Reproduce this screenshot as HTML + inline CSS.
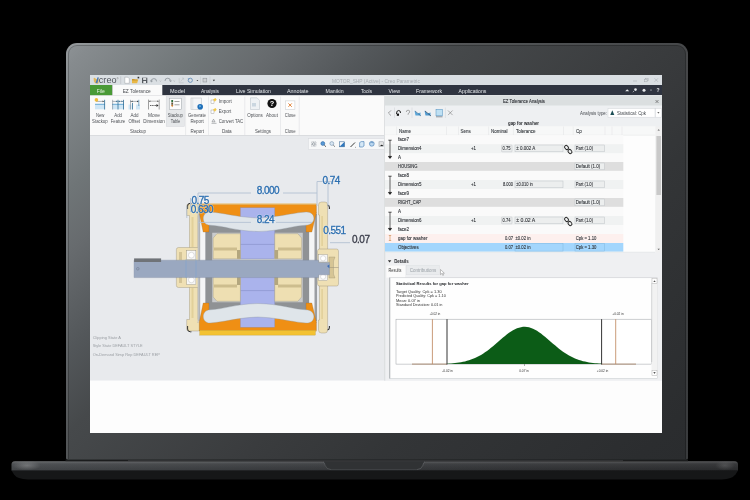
<!DOCTYPE html>
<html><head><meta charset="utf-8">
<style>
*{margin:0;padding:0;box-sizing:border-box}
html,body{width:750px;height:500px;overflow:hidden;background:#000;font-family:"Liberation Sans",sans-serif}
.a{position:absolute}
#lid{left:65.5px;top:42.5px;width:622.5px;height:417.3px;border-radius:11px 11px 2px 2px;
 background:linear-gradient(135deg,#8e9396 0%,#868b8e 2.6%,#6f7577 14.5%,#676b6e 20.4%,#53575a 29.9%,#46494b 37.7%,#3a3c3e 56.8%,#333537 70%,#2b2d2f 95%,#2a2c2e 100%);
}
</style></head><body>
<div id="lid" class="a"></div>
<div class="a" style="left:65.5px;top:42.5px;width:622.5px;height:416px;border:2px solid rgba(255,255,255,0.07);border-bottom:none;border-radius:11px 11px 0 0"></div>
<div class="a" style="left:67.5px;top:44.5px;width:618.5px;height:414px;border:1px solid rgba(0,0,0,0.22);border-bottom:none;border-radius:9px 9px 0 0"></div>
<svg class="a" style="left:0;top:0;will-change:transform" width="750" height="500" viewBox="0 0 750 500" font-family="'Liberation Sans', sans-serif">
<!--LAPTOP-->
<defs>
 <linearGradient id="bandH" x1="0" x2="1" y1="0" y2="0">
  <stop offset="0" stop-color="#44474a"/><stop offset="0.5" stop-color="#35373a"/><stop offset="1" stop-color="#2b2c2e"/>
 </linearGradient>
 <linearGradient id="bandV" x1="0" x2="0" y1="0" y2="1">
  <stop offset="0" stop-color="#000" stop-opacity="0.5"/><stop offset="0.12" stop-color="#fff" stop-opacity="0.16"/><stop offset="0.3" stop-color="#fff" stop-opacity="0.06"/><stop offset="1" stop-color="#000" stop-opacity="0.05"/>
 </linearGradient>
 <radialGradient id="hl" cx="0.5" cy="0.5" r="0.5">
  <stop offset="0" stop-color="#fff" stop-opacity="0.22"/><stop offset="1" stop-color="#fff" stop-opacity="0"/>
 </radialGradient>
</defs>
<path d="M11.5 470.6 H738 L735.5 474.5 Q732 479 722 479.6 H28 Q17 479 14 474.5 Z" fill="#161718"/>
<path d="M11.5 464.5 Q11.5 461 15.5 461 H734 Q738 461 738 464.5 V470.6 H11.5 Z" fill="url(#bandH)"/>
<path d="M11.5 464.5 Q11.5 461 15.5 461 H734 Q738 461 738 464.5 V470.6 H11.5 Z" fill="url(#bandV)"/>
<ellipse cx="27" cy="465.5" rx="14" ry="5" fill="url(#hl)"/>
<ellipse cx="725" cy="465.5" rx="10" ry="5" fill="url(#hl)" opacity="0.6"/>
<rect x="65.5" y="459.6" width="622.5" height="1.6" fill="#1b1c1d"/>
<line x1="128" y1="460.5" x2="623" y2="460.5" stroke="#4a4c4f" stroke-width="0.6" opacity="0.8"/>
<path d="M322.5 461.2 Q324 461.5 325 465 Q326 469.5 331 469.8 H417 Q422 469.5 423 465 Q424 461.5 425.5 461.2 Z" fill="#303234"/>
<path d="M323 461.5 Q324.5 462 325.2 465.5 Q326.5 469.5 331 469.6" fill="none" stroke="#8a8d90" stroke-width="0.6" opacity="0.5"/>
<path d="M425 461.5 Q423.5 462 422.8 465.5 Q421.5 469.5 417 469.6" fill="none" stroke="#9a9da0" stroke-width="0.6" opacity="0.5"/>
<line x1="331" y1="469.6" x2="417" y2="469.6" stroke="#505356" stroke-width="0.5"/>
<!--/LAPTOP-->
<rect x="90" y="75" width="572" height="358" fill="#fdfdfd"/>
<!--CHROME-->
<!-- title bar -->
<rect x="90" y="75" width="572" height="10" fill="#dadfe3"/>
<g>
 <path d="M93.6 78.3 Q93.6 83.8 97.5 83.8 Q98.6 83.8 98.6 82.5 V77.6 Q96.5 80.8 94.8 77.8 Z" fill="#e2b75a"/>
 <path d="M95.6 82.8 L97.6 77.2 L98.8 77.6 L97.3 83.2 Z" fill="#3f78c0"/>
 <text x="98.8" y="82.9" font-size="8.3" fill="#50555c" textLength="17.8" lengthAdjust="spacingAndGlyphs">creo</text>
 <circle cx="117.6" cy="78.2" r="0.7" fill="none" stroke="#666" stroke-width="0.3"/>
 <line x1="120.7" y1="76.3" x2="120.7" y2="84" stroke="#b9bec3" stroke-width="0.6"/>
 <path d="M124.8 77.2 h3 l1.5 1.5 v4.6 h-4.5 z" fill="#fff" stroke="#8a8f94" stroke-width="0.4"/>
 <path d="M132 79.6 h6.3 l-1.2 3.6 h-5.1 z" fill="#e9b845"/>
 <path d="M132 79 h2.2 l0.6 0.6 h2.6 v0.8 h-5.4z" fill="#c9962e"/>
 <rect x="137.6" y="76.8" width="1.6" height="1.6" fill="#333"/>
 <rect x="142" y="77.7" width="5.3" height="5.5" fill="#565b61"/>
 <rect x="143.1" y="78.1" width="3.1" height="1.8" fill="#e6e8ea"/>
 <rect x="143.3" y="81" width="2.7" height="2" fill="#e6e8ea"/>
 <path d="M151.3 81.8 q-0.4 -3.2 2.6 -3.2 q2.8 0 2.6 2.8" fill="none" stroke="#7f868e" stroke-width="0.7"/>
 <path d="M150.4 80.2 l0.9 1.8 l1.5 -1.1" fill="none" stroke="#7f868e" stroke-width="0.55"/>
 <path d="M159.7 80.6 l0.8 0.7 l0.8 -0.7" fill="none" stroke="#8a8f94" stroke-width="0.4"/>
 <path d="M165 81 q-0.2 -2.8 2.8 -2.8 q2.8 0 2.6 3" fill="none" stroke="#7f868e" stroke-width="0.7"/>
 <path d="M169.5 80.4 l1.1 1.5 l1.1 -1.5" fill="none" stroke="#7f868e" stroke-width="0.55"/>
 <path d="M173.5 80.6 l0.8 0.7 l0.8 -0.7" fill="none" stroke="#8a8f94" stroke-width="0.4"/>
 <path d="M179.2 78.2 v4.6 h4.4" fill="none" stroke="#b5babf" stroke-width="0.5"/>
 <path d="M180.6 81.5 l3 -3.4 M182 78.1 h1.6 v1.6" fill="none" stroke="#b5babf" stroke-width="0.5"/>
 <circle cx="190.3" cy="80.3" r="2.1" fill="none" stroke="#5a86b4" stroke-width="0.8"/>
 <path d="M188 78.2 l1 1" stroke="#5a86b4" stroke-width="0.6"/>
 <path d="M196.5 80 h1.8 l-0.9 1.1z" fill="#222"/>
 <line x1="200.5" y1="76.5" x2="200.5" y2="84" stroke="#c2c6ca" stroke-width="0.5"/>
 <rect x="203" y="78.2" width="3.8" height="3.8" fill="#d0d3d6" stroke="#8a8f94" stroke-width="0.5"/>
 <line x1="210" y1="76.5" x2="210" y2="84" stroke="#c2c6ca" stroke-width="0.5"/>
 <path d="M212.8 79.8 h2.2 l-1.1 1.4z" fill="#222"/>
</g>
<text x="332" y="82.6" font-size="4.85" fill="#a7acb1">MOTOR_SHP (Active) - Creo Parametric</text>
<line x1="633" y1="81" x2="637" y2="81" stroke="#a0a5aa" stroke-width="0.5"/>
<rect x="645.5" y="78.2" width="2.6" height="2.6" fill="none" stroke="#a0a5aa" stroke-width="0.45"/>
<rect x="644.5" y="79.2" width="2.6" height="2.6" fill="#dadfe3" stroke="#a0a5aa" stroke-width="0.45"/>
<path d="M654.5 78.3 l3.5 3.5 M658 78.3 l-3.5 3.5" stroke="#a0a5aa" stroke-width="0.5"/>
<!-- tab row -->
<rect x="90" y="85" width="572" height="10.4" fill="#2f3440"/>
<rect x="90" y="85" width="22.3" height="10.4" fill="#4a9a36"/>
<rect x="112.3" y="85" width="50" height="10.4" fill="#fafafa"/>
<g font-size="5.4" fill="#e4e7ea" lengthAdjust="spacingAndGlyphs">
 <text x="96.7" y="92.7" fill="#e8f2e4" textLength="8" lengthAdjust="spacingAndGlyphs">File</text>
 <text x="122.7" y="92.7" fill="#4a4d52" textLength="28" lengthAdjust="spacingAndGlyphs">EZ Tolerance</text>
 <text x="170" y="92.7" textLength="15" lengthAdjust="spacingAndGlyphs">Model</text>
 <text x="201" y="92.7" textLength="18" lengthAdjust="spacingAndGlyphs">Analysis</text>
 <text x="236" y="92.7" textLength="35" lengthAdjust="spacingAndGlyphs">Live Simulation</text>
 <text x="287" y="92.7" textLength="21.6" lengthAdjust="spacingAndGlyphs">Annotate</text>
 <text x="325.6" y="92.7" textLength="18" lengthAdjust="spacingAndGlyphs">Manikin</text>
 <text x="361" y="92.7" textLength="11" lengthAdjust="spacingAndGlyphs">Tools</text>
 <text x="388.6" y="92.7" textLength="11.4" lengthAdjust="spacingAndGlyphs">View</text>
 <text x="416" y="92.7" textLength="26" lengthAdjust="spacingAndGlyphs">Framework</text>
 <text x="458.6" y="92.7" textLength="27.8" lengthAdjust="spacingAndGlyphs">Applications</text>
</g>
<g fill="#e8eaec">
 <path d="M625.2 91.3 l2 -2 l2 2 z"/>
 <circle cx="635.5" cy="89.6" r="1.3"/>
 <path d="M634 91 l-1.2 1.2" stroke="#e8eaec" stroke-width="0.6"/>
 <circle cx="644" cy="90.2" r="1.5"/>
 <path d="M650 89.8 h2 l-1 1z"/>
 <text x="656.5" y="92.3" font-size="5" font-weight="bold">?</text>
</g>
<!-- ribbon -->
<rect x="90" y="95.4" width="572" height="40.2" fill="#fafafa"/>
<line x1="90" y1="135.6" x2="384" y2="135.6" stroke="#d7d9dc" stroke-width="1"/>
<rect x="166.2" y="96.6" width="18.3" height="29.9" fill="#e6e8ea" stroke="#d6d8db" stroke-width="0.5"/>
<g stroke="#e2e4e6" stroke-width="0.7">
 <line x1="185.6" y1="96.5" x2="185.6" y2="135"/>
 <line x1="208.5" y1="96.5" x2="208.5" y2="135"/>
 <line x1="244.8" y1="96.5" x2="244.8" y2="135"/>
 <line x1="280.5" y1="96.5" x2="280.5" y2="135"/>
 <line x1="299.2" y1="96.5" x2="299.2" y2="135"/>
</g>
<g font-size="4.6" fill="#4e5156">
 <text x="95.9" y="117.4" textLength="8.5" lengthAdjust="spacingAndGlyphs">New</text>
 <text x="92.1" y="123.3" textLength="15.5" lengthAdjust="spacingAndGlyphs">Stackup</text>
 <text x="114.3" y="117.4" textLength="7.7" lengthAdjust="spacingAndGlyphs">Add</text>
 <text x="110.8" y="123.3" textLength="14.4" lengthAdjust="spacingAndGlyphs">Feature</text>
 <text x="130.5" y="117.4" textLength="8.0" lengthAdjust="spacingAndGlyphs">Add</text>
 <text x="128.4" y="123.3" textLength="11.7" lengthAdjust="spacingAndGlyphs">Offset</text>
 <text x="148.1" y="117.4" textLength="11.8" lengthAdjust="spacingAndGlyphs">Move</text>
 <text x="143.3" y="123.3" textLength="21.4" lengthAdjust="spacingAndGlyphs">Dimension</text>
 <text x="167.7" y="117.4" textLength="15.2" lengthAdjust="spacingAndGlyphs">Stackup</text>
 <text x="170.7" y="123.3" textLength="9.6" lengthAdjust="spacingAndGlyphs">Table</text>
 <text x="188.0" y="117.4" textLength="18.0" lengthAdjust="spacingAndGlyphs">Generate</text>
 <text x="190.4" y="123.3" textLength="13.3" lengthAdjust="spacingAndGlyphs">Report</text>
 <text x="247.3" y="117.4" textLength="15.6" lengthAdjust="spacingAndGlyphs">Options</text>
 <text x="266.1" y="117.4" textLength="11.8" lengthAdjust="spacingAndGlyphs">About</text>
 <text x="284.8" y="117.4" textLength="10.7" lengthAdjust="spacingAndGlyphs">Close</text>
 <text x="130.0" y="132.9" textLength="16.0" lengthAdjust="spacingAndGlyphs">Stackup</text>
 <text x="190.4" y="132.9" textLength="13.6" lengthAdjust="spacingAndGlyphs">Report</text>
 <text x="221.9" y="132.9" textLength="9.8" lengthAdjust="spacingAndGlyphs">Data</text>
 <text x="254.9" y="132.9" textLength="16.0" lengthAdjust="spacingAndGlyphs">Settings</text>
 <text x="284.8" y="132.9" textLength="10.7" lengthAdjust="spacingAndGlyphs">Close</text>
 <text x="218.7" y="102.6" textLength="13.0" lengthAdjust="spacingAndGlyphs">Import</text>
 <text x="218.7" y="112.6" textLength="12.6" lengthAdjust="spacingAndGlyphs">Export</text>
 <text x="218.7" y="122.7" textLength="24.5" lengthAdjust="spacingAndGlyphs">Convert TAC</text>
</g>
<!-- ribbon icons -->
<g>
 <!-- New Stackup -->
 <rect x="95" y="103.8" width="10" height="5.5" fill="#cfe6f5"/>
 <rect x="95" y="103.8" width="10" height="1.2" fill="#7fb7dc"/>
 <line x1="96" y1="101.4" x2="104.5" y2="101.4" stroke="#5b6a78" stroke-width="0.5"/>
 <line x1="104.6" y1="99.8" x2="104.6" y2="109.5" stroke="#2f6e98" stroke-width="0.8"/>
 <path d="M103.9 101.4 l-1.3 -0.8 v1.6z" fill="#333"/>
 <circle cx="96.4" cy="99.9" r="1.8" fill="#f2bd3a"/>
 <!-- Add Feature -->
 <rect x="112" y="103.8" width="12" height="5.5" fill="#cfe6f5"/>
 <rect x="112" y="103.8" width="12" height="1.2" fill="#7fb7dc"/>
 <line x1="112.5" y1="101.4" x2="123.5" y2="101.4" stroke="#5b6a78" stroke-width="0.5"/>
 <line x1="112.6" y1="99.8" x2="112.6" y2="109.5" stroke="#6a7680" stroke-width="0.5"/>
 <line x1="118" y1="99.8" x2="118" y2="109.5" stroke="#2f6e98" stroke-width="0.8"/>
 <line x1="123.5" y1="99.8" x2="123.5" y2="109.5" stroke="#2f6e98" stroke-width="0.8"/>
 <path d="M117.4 101.4 l-1.3 -0.8 v1.6z M118.6 101.4 l1.3 -0.8 v1.6z M122.8 101.4 l-1.3 -0.8 v1.6z" fill="#2f6e98"/>
 <!-- Add Offset -->
 <rect x="128.5" y="104.5" width="3" height="5" fill="#cfe6f5"/>
 <rect x="136" y="104.5" width="4" height="5" fill="#cfe6f5"/>
 <line x1="130" y1="101.4" x2="138.8" y2="101.4" stroke="#5b6a78" stroke-width="0.5"/>
 <line x1="130.5" y1="99.8" x2="130.5" y2="109.5" stroke="#6a7680" stroke-width="0.5"/>
 <line x1="132.5" y1="103" x2="132.5" y2="109.5" stroke="#2f6e98" stroke-width="0.8"/>
 <line x1="138.8" y1="99.8" x2="138.8" y2="106" stroke="#2f6e98" stroke-width="0.6"/>
 <path d="M138.3 101.4 l-1.3 -0.8 v1.6z M131.2 101.4 l1.3 -0.8 v1.6z" fill="#333"/>
 <!-- Move Dimension -->
 <line x1="148.5" y1="99.6" x2="148.5" y2="109.5" stroke="#444" stroke-width="0.5"/>
 <line x1="159.2" y1="99.6" x2="159.2" y2="109.5" stroke="#444" stroke-width="0.5"/>
 <line x1="149" y1="101.2" x2="158.5" y2="101.2" stroke="#555" stroke-width="0.4"/>
 <path d="M149 101.2 l1.3 -0.8 v1.6z M158.7 101.2 l-1.3 -0.8 v1.6z" fill="#333"/>
 <line x1="150" y1="105.5" x2="157" y2="105.5" stroke="#222" stroke-width="0.7" stroke-dasharray="1.2 0.5"/>
 <path d="M158.5 105.5 l-2 -1.4 v2.8z" fill="#222"/>
 <!-- Stackup table -->
 <rect x="169.3" y="98.2" width="12" height="11.4" fill="#fdfdfd" stroke="#9ca1a6" stroke-width="0.5"/>
 <rect x="171.3" y="100" width="1.8" height="2.2" fill="#2b6e3a"/>
 <rect x="171.3" y="102.6" width="1.8" height="2.2" fill="#6b5a3e"/>
 <path d="M171 105 h2.4 l-1.2 2.2z" fill="#c77c2e"/>
 <line x1="174.5" y1="101.5" x2="179.5" y2="101.5" stroke="#666" stroke-width="0.6"/>
 <line x1="174.5" y1="104.8" x2="179.5" y2="104.8" stroke="#666" stroke-width="0.6"/>
 <!-- Generate report -->
 <rect x="191" y="98" width="10.5" height="11.5" fill="#f4f5f6" stroke="#b8bcc0" stroke-width="0.5"/>
 <line x1="192.8" y1="98" x2="192.8" y2="109.5" stroke="#c6cacd" stroke-width="0.4"/>
 <circle cx="200.2" cy="106.8" r="2.8" fill="#1f6fb8"/>
 <path d="M199.2 105.5 q1 -0.7 1.8 0.4 q-0.5 1.2 -1.5 1.5z" fill="#7cc2ec"/>
 <!-- import/export/convert -->
 <rect x="211" y="100" width="3" height="3.5" fill="#fff" stroke="#777" stroke-width="0.35"/>
 <path d="M213 99.5 l2.5 -1.5 l1.2 1.8 l-2 2z" fill="#f2c94c"/>
 <rect x="211" y="110" width="3" height="3.5" fill="#fff" stroke="#777" stroke-width="0.35"/>
 <path d="M213 109.5 l2.5 -1.5 l1.2 1.8 l-2 2z" fill="#f2c94c"/>
 <path d="M211.5 123.3 h5 M212 121.8 l1.5 -2.6 l1.5 2.6z" fill="none" stroke="#6b6f74" stroke-width="0.5"/>
 <!-- Options -->
 <path d="M250.5 97.8 h6.5 l2.5 2.5 v9.2 h-9z" fill="#eef1f4" stroke="#b5bcc4" stroke-width="0.5"/>
 <rect x="252" y="103" width="4" height="3.5" fill="#cad6e0"/>
 <!-- About -->
 <circle cx="272" cy="103.5" r="4.6" fill="#121212"/>
 <text x="272" y="106.3" font-size="7.4" font-weight="bold" fill="#fff" text-anchor="middle">?</text>
 <!-- Close -->
 <rect x="285.3" y="100.9" width="9.6" height="8.5" fill="#fff" stroke="#c6c8ca" stroke-width="0.5"/>
 <path d="M288.4 103.4 l3.4 3.4 M291.8 103.4 l-3.4 3.4" stroke="#e07b2a" stroke-width="0.9"/>
</g>
<!--/CHROME-->
<rect x="90" y="136" width="294.5" height="244.5" fill="#e8eaed"/>
<!--CAD-->
<defs>
 <g id="half">
  <!-- end caps upper -->
  <path d="M189.5 267.5 V215.5 h-2.8 V206 q0 -2 2 -2 h9.3 q2 0 2 2 V215.5 h-2 V267.5z" fill="#efe0b4" stroke="#8a826a" stroke-width="0.35"/><rect x="191.5" y="217" width="2" height="30" fill="#e2d09a"/>
  <path d="M176.4 267.5 V249.5 q0 -2 2 -2 h20 q2 0 2 2 V267.5z" fill="#efe0b4" stroke="#8a826a" stroke-width="0.35"/>
  <path d="M319.5 267.5 V215 h-1 V205 q0 -3 3 -3 h3.5 q2.6 0 2.6 3 V267.5z" fill="#efe0b4" stroke="#8a826a" stroke-width="0.35"/><rect x="321.3" y="216" width="1.6" height="30" fill="#e2d09a"/>
  <path d="M317.5 267.5 V251 q0 -2 2 -2 h17 q2 0 2 2 V267.5z" fill="#efe0b4" stroke="#8a826a" stroke-width="0.35"/><path d="M329 267.5 V257 h6 l-1.5 4 V267.5z" fill="#d6c595" stroke="#8a826a" stroke-width="0.3"/>
  <rect x="186.8" y="250.6" width="9.1" height="9.1" fill="#f6f6f6" stroke="#777" stroke-width="0.3"/>
  <circle cx="191.35" cy="255.15" r="2.9" fill="#fff" stroke="#999" stroke-width="0.3"/>
  <rect x="318.6" y="254.6" width="9" height="7.4" fill="#f6f6f6" stroke="#777" stroke-width="0.3"/>
  <circle cx="323.1" cy="258.3" r="2.6" fill="#fff" stroke="#999" stroke-width="0.3"/>
  <rect x="179" y="252" width="3" height="8" fill="#c9b88a" opacity="0.7"/>
  <!-- liners -->
  <path d="M197.8 212 L205.5 228 V267.5 H197.8z" fill="#f4f5f6" stroke="#9a9ea3" stroke-width="0.3"/>
  <path d="M316.5 212 L309 228 V267.5 H316.5z" fill="#f4f5f6" stroke="#9a9ea3" stroke-width="0.3"/>
  <rect x="314.5" y="214" width="2.5" height="53" fill="#9b9ea2"/>
  <rect x="198.2" y="214" width="2" height="53" fill="#b2b5b8"/>
  <!-- gray inner -->
  <path d="M205.5 222 H309 V267.5 H205.5z" fill="#8f9295"/>
  <path d="M212.2 232.8 H302.8 V267.5 H212.2z" fill="#c9cbcd"/>
  <!-- orange housing -->
  <path d="M199.3 204.2 H316.4 V213 L311.8 232 H306 V224 H209 V232 H203.2 L199.3 213z" fill="#ef8f14" stroke="#8f6a3a" stroke-width="0.3"/>
  <rect x="199.8" y="203.5" width="116.6" height="1" fill="#f1c46a"/>
  <!-- lavender stack -->
  <rect x="240.4" y="207.8" width="34.3" height="51" fill="#aab3ec" stroke="#7f88c0" stroke-width="0.3"/>
  <line x1="240.4" y1="244.4" x2="274.7" y2="244.4" stroke="#7f88c0" stroke-width="0.5"/>
  <!-- coil -->
  <path d="M210 212 C225 213 235 217 258 218 C281 217 291 213 306 212 C316.5 211.5 316.5 225 306 225.2 C291 226 281 231 258 231.5 C235 231 225 226 210 225.2 C201 225 201 212 210 212Z" fill="#dfe5ea" stroke="#8f979f" stroke-width="0.35"/>
  <!-- rotor blocks -->
  <path d="M213.2 238 L217 233.7 H240.4 V258.8 H213.2z" fill="#eedfb2" stroke="#8d8468" stroke-width="0.3"/>
  <rect x="214" y="247.5" width="23" height="3" fill="#cdbd8e"/>
  <rect x="237" y="250" width="3.4" height="8.8" fill="#b3a67e"/>
  <path d="M301.6 238 L297.8 233.7 H274.7 V258.8 H301.6z" fill="#eedfb2" stroke="#8d8468" stroke-width="0.3"/>
  <rect x="278" y="247.5" width="23" height="3" fill="#cdbd8e"/>
  <rect x="274.7" y="250" width="3.4" height="8.8" fill="#b3a67e"/>
  <!-- bolts -->
  <path d="M187.6 209 v-3 q0 -2.8 2.8 -2.8 h1" fill="none" stroke="#333" stroke-width="1"/>
  <path d="M327.6 205 q1.8 0.5 1.8 2.5 v1.5" fill="none" stroke="#333" stroke-width="1.1"/>
 </g>
</defs>
<use href="#half"/>
<use href="#half" transform="translate(0,535) scale(1,-1)"/>
<!-- shaft -->
<path d="M134.1 260.2 H318.6 V262.4 H329.4 V274.8 H318.6 V277.6 H134.1z" fill="#9aa8c0" stroke="#7d8aa2" stroke-width="0.4"/><path d="M327 266 l2.4 -1.5 v4z" fill="#3d6fb8"/>
<rect x="134.1" y="258.4" width="27" height="3.6" fill="#6f7378"/>
<circle cx="137.8" cy="268.8" r="1.3" fill="none" stroke="#5a6478" stroke-width="0.4"/>
<line x1="186" y1="259" x2="186" y2="278" stroke="#6aa0d8" stroke-width="0.6" opacity="0.6"/>
<line x1="196" y1="259" x2="196" y2="278" stroke="#6aa0d8" stroke-width="0.6" opacity="0.6"/>
<!-- bottom foot -->
<rect x="199.8" y="330.3" width="115.5" height="4.8" fill="#f3c232" stroke="#b58d1a" stroke-width="0.3"/>
<!-- dimensions -->
<g stroke="#b3c2d3" stroke-width="0.9" fill="none">
 <path d="M198 193 H251 M283 193 H317"/>
 <path d="M198 193 V212"/>
 <path d="M317 181.5 V206 M328 181.5 V206 M317 181.5 H340"/>
 <path d="M198 222.4 H251 M276 222.4 H312"/>
 <path d="M190.5 198 V212 M186.8 206 V218"/>
 <path d="M330 242.7 H350"/>
</g>
<g font-size="10" letter-spacing="-0.55" fill="none" stroke="#ffffff" stroke-width="1.1" stroke-opacity="0.6" stroke-linejoin="round">
 <text x="256.8" y="194">8.000</text>
 <text x="256.8" y="223.3">8.24</text>
 <text x="191.5" y="203.6">0.75</text>
 <text x="190.8" y="213.2">0.630</text>
 <text x="322.4" y="183.6">0.74</text>
 <text x="323.3" y="233.6">0.551</text>
</g>
<g font-size="10" letter-spacing="-0.55" fill="#2d6fb0" stroke="#2d6fb0" stroke-width="0.35">
 <text x="256.8" y="194">8.000</text>
 <text x="256.8" y="223.3">8.24</text>
 <text x="191.5" y="203.6">0.75</text>
 <text x="190.8" y="213.2">0.630</text>
 <text x="322.4" y="183.6">0.74</text>
 <text x="323.3" y="233.6">0.551</text>
</g>
<text x="352" y="243.2" font-size="10" letter-spacing="-0.5" fill="#383b48" stroke="#383b48" stroke-width="0.3">0.07</text>
<!-- status text -->
<g font-size="4" fill="#9ca0a5">
 <text x="92.7" y="338.7" textLength="28.2" lengthAdjust="spacingAndGlyphs">Clipping State A</text>
 <text x="92.7" y="347" textLength="50" lengthAdjust="spacingAndGlyphs">Style State DEFAULT STYLE</text>
 <text x="92.7" y="355.6" textLength="67.2" lengthAdjust="spacingAndGlyphs">On-Demand Simp Rep DEFAULT REP</text>
</g>
<!-- view toolbar -->
<rect x="308.4" y="138.6" width="80" height="10.8" fill="#f7f8f9" stroke="#d5d8db" stroke-width="0.5"/>
<g stroke-width="0.55" fill="none">
 <rect x="311.6" y="141.8" width="4.4" height="4.4" stroke="#8a9098" stroke-dasharray="1 0.6"/>
 <circle cx="313.8" cy="144" r="1.3" stroke="#5a6470"/>
 <circle cx="322.8" cy="143.5" r="1.9" stroke="#1f5e9e" fill="#5a9ad6"/><path d="M324.2 145 l1.8 1.8" stroke="#333" stroke-width="0.8"/>
 <circle cx="331.8" cy="143.5" r="1.9" stroke="#6a8aa8" fill="#d9e6f2"/><path d="M333.2 145 l1.8 1.8" stroke="#666" stroke-width="0.8"/>
 <path d="M339.5 146.8 h5 v-5z" fill="#2f78c0" stroke="none"/><rect x="339.5" y="141.8" width="5" height="5" stroke="#3a6a98"/>
 <path d="M350.5 147 l4.5 -4.5" stroke="#222" stroke-width="0.9"/><circle cx="355.6" cy="147.2" r="0.4" fill="#222"/>
 <path d="M359.6 142.6 l1.6 -1 h2.8 v4.4 l-1.6 1 h-2.8z" fill="#d6e8f6" stroke="#2e6aa8"/>
 <circle cx="371.8" cy="143.8" r="2.4" fill="#bcd8f0" stroke="#2e6aa8"/><path d="M370.5 143 q1.3 -1.5 2.6 0" stroke="#2e6aa8"/>
 <rect x="379" y="141.8" width="4.6" height="4.6" fill="#e3e4e5" stroke="#9a9ea3"/><path d="M380.2 146 q1.5 -2.5 3 0z" fill="#222" stroke="none"/>
</g>
<!--/CAD-->
<rect x="384.4" y="95.4" width="277.6" height="285.2" fill="#f0f1f2"/>
<!--DIALOG-->
<!-- dialog base -->
<rect x="384.4" y="95.4" width="277.6" height="285.2" fill="#eff0f2"/>
<line x1="384.7" y1="95.4" x2="384.7" y2="380.6" stroke="#c9ccd0" stroke-width="0.6"/>
<!-- title -->
<rect x="385" y="95.4" width="277" height="10.3" fill="#dbdfe0"/>
<text x="503" y="102.9" font-size="4.6" fill="#2e3136" stroke="#2e3136" stroke-width="0.1" textLength="42" lengthAdjust="spacingAndGlyphs">EZ Tolerance Analysis</text>
<path d="M655.5 100 l3 3 M658.5 100 l-3 3" stroke="#444" stroke-width="0.55"/>
<!-- toolbar -->
<rect x="385" y="105.7" width="277" height="20.7" fill="#eef0f2"/>
<g stroke="#cfd2d6" stroke-width="0.5">
 <line x1="394.5" y1="107.5" x2="394.5" y2="118"/>
 <line x1="412" y1="107.5" x2="412" y2="118"/>
 <line x1="445.4" y1="107.5" x2="445.4" y2="118"/>
</g>
<path d="M391 110.4 l-2.6 2.6 l2.6 2.6" fill="none" stroke="#555" stroke-width="0.5"/>
<path d="M396.5 114 q-0.3 -3.5 2.2 -3.5 q2 0 1.8 2.5" fill="none" stroke="#111" stroke-width="0.9"/>
<rect x="396.8" y="113.6" width="2.2" height="2.2" fill="#111"/>
<path d="M406.3 112 q0 -1.8 1.8 -1.8 q1.8 0 1.6 1.8 q-0.2 1 -1.6 1.6 v1.2" fill="none" stroke="#777" stroke-width="0.6"/>
<path d="M414.5 110.5 l3 3 l3 -1 v3 h-5z" fill="#5aa6d8"/>
<path d="M415 111 l6 5" stroke="#2d5c88" stroke-width="0.6"/>
<path d="M424.5 110.5 l3 3 l3 -1 v3 h-5z" fill="#4f9ad0"/>
<path d="M425 111 l6 5" stroke="#1d3c5c" stroke-width="0.7"/>
<rect x="436" y="109.3" width="6.5" height="6.5" fill="#bfe0f3" stroke="#4f8fbf" stroke-width="0.5"/>
<line x1="436" y1="116.8" x2="442.5" y2="116.8" stroke="#4a5560" stroke-width="0.6"/>
<path d="M448 110.5 l4.6 4.6 M452.6 110.5 l-4.6 4.6" stroke="#666" stroke-width="0.5"/>
<text x="580" y="114.6" font-size="4.7" fill="#43474d" textLength="27" lengthAdjust="spacingAndGlyphs">Analysis type:</text>
<rect x="608" y="108.6" width="47" height="8.6" fill="#fff" stroke="#d3d6da" stroke-width="0.5"/>
<rect x="655.5" y="108.6" width="5.8" height="8.6" fill="#fff" stroke="#d3d6da" stroke-width="0.5"/>
<path d="M657.3 112.3 h2.2 l-1.1 1.2z" fill="#333"/>
<path d="M612.3 110.3 l2 4.6 h-4z" fill="#1c4e55"/>
<text x="617" y="114.6" font-size="4.7" fill="#43474d" textLength="29" lengthAdjust="spacingAndGlyphs">Statistical: Cpk</text>
<text x="508" y="124.6" font-size="4.8" font-weight="bold" fill="#1e2024" textLength="31" lengthAdjust="spacingAndGlyphs">gap for washer</text>
<!-- table -->
<rect x="385" y="126.6" width="270.4" height="125.6" fill="#fdfdfd"/>
<rect x="385" y="126.6" width="270.4" height="8.6" fill="#f7f8f8"/>
<line x1="385" y1="135.2" x2="655" y2="135.2" stroke="#e1e3e5" stroke-width="0.5"/>
<g stroke="#e1e3e5" stroke-width="0.5">
 <line x1="396.6" y1="126.6" x2="396.6" y2="135.2"/>
 <line x1="446.5" y1="126.6" x2="446.5" y2="135.2"/>
 <line x1="458.5" y1="126.6" x2="458.5" y2="135.2"/>
 <line x1="488.6" y1="126.6" x2="488.6" y2="135.2"/>
 <line x1="513.4" y1="126.6" x2="513.4" y2="135.2"/>
 <line x1="563.5" y1="126.6" x2="563.5" y2="135.2"/>
 <line x1="573.2" y1="126.6" x2="573.2" y2="135.2"/>
 <line x1="605" y1="126.6" x2="605" y2="135.2"/>
 <line x1="612" y1="126.6" x2="612" y2="135.2"/>
 <line x1="622" y1="126.6" x2="622" y2="135.2"/>
</g>
<g font-size="4.5" fill="#3c4045" stroke="#3c4045" stroke-width="0.1">
 <text x="399" y="132.8">Name</text>
 <text x="460.5" y="132.8">Sens</text>
 <text x="491" y="132.8">Nominal</text>
 <text x="516" y="132.8">Tolerance</text>
 <text x="576" y="132.8">Cp</text>
</g>
<!-- rows bg -->
<rect x="385" y="135.2" width="238.3" height="117" fill="#fafafa"/>
<rect x="385" y="144.2" width="238.3" height="9" fill="#f0f2f2"/>
<rect x="385" y="162" width="238.3" height="8.8" fill="#dedede"/>
<rect x="385" y="180" width="238.3" height="9" fill="#f0f2f2"/>
<rect x="385" y="198" width="238.3" height="8.8" fill="#dedede"/>
<rect x="385" y="216" width="238.3" height="9" fill="#f0f2f2"/>
<rect x="385" y="234" width="238.3" height="9" fill="#fdf0ee"/>
<rect x="385" y="243" width="238.3" height="8.6" fill="#a3d6fd"/>
<!-- row texts -->
<g font-size="4.7" fill="#2e3136" stroke="#2e3136" stroke-width="0.1">
 <text x="398.0" y="141.4" textLength="11.0" lengthAdjust="spacingAndGlyphs">face7</text>
 <text x="398.0" y="150.4" textLength="23.6" lengthAdjust="spacingAndGlyphs">Dimension4</text>
 <text x="398.0" y="159.4" textLength="3.0" lengthAdjust="spacingAndGlyphs">A</text>
 <text x="398.0" y="168.3" textLength="19.4" lengthAdjust="spacingAndGlyphs">HOUSING</text>
 <text x="398.0" y="177.4" textLength="11.0" lengthAdjust="spacingAndGlyphs">face8</text>
 <text x="398.0" y="186.4" textLength="23.6" lengthAdjust="spacingAndGlyphs">Dimension5</text>
 <text x="398.0" y="195.4" textLength="11.0" lengthAdjust="spacingAndGlyphs">face9</text>
 <text x="398.0" y="204.3" textLength="23.0" lengthAdjust="spacingAndGlyphs">RIGHT_CAP</text>
 <text x="398.0" y="213.4" textLength="3.0" lengthAdjust="spacingAndGlyphs">A</text>
 <text x="398.0" y="222.4" textLength="23.6" lengthAdjust="spacingAndGlyphs">Dimension6</text>
 <text x="398.0" y="231.4" textLength="11.0" lengthAdjust="spacingAndGlyphs">face2</text>
 <text x="398.0" y="240.4" textLength="29.4" lengthAdjust="spacingAndGlyphs">gap for washer</text>
 <text x="398.0" y="249.2" textLength="20.6" lengthAdjust="spacingAndGlyphs">Objectives</text>
 <text x="471.0" y="150.4" textLength="5.0" lengthAdjust="spacingAndGlyphs">+1</text>
 <text x="471.0" y="186.4" textLength="5.0" lengthAdjust="spacingAndGlyphs">+1</text>
 <text x="471.0" y="222.4" textLength="5.0" lengthAdjust="spacingAndGlyphs">+1</text>
 <text x="503.0" y="186.4" textLength="10.0" lengthAdjust="spacingAndGlyphs">8.000</text>
 <text x="505.0" y="240.4" textLength="8.0" lengthAdjust="spacingAndGlyphs">0.07</text>
 <text x="505.0" y="249.2" textLength="8.0" lengthAdjust="spacingAndGlyphs">0.07</text>
 <text x="515.5" y="240.4" textLength="15.0" lengthAdjust="spacingAndGlyphs">±0.02 in</text>
 <text x="515.5" y="249.2" textLength="15.0" lengthAdjust="spacingAndGlyphs">±0.02 in</text>
 <text x="575.7" y="240.4" textLength="20.7" lengthAdjust="spacingAndGlyphs">Cpk = 1.10</text>
 <text x="575.7" y="249.2" textLength="20.7" lengthAdjust="spacingAndGlyphs">Cpk = 1.30</text>
</g>
<!-- cells with boxes -->
<g fill="#eceeee" stroke="#b9bdc2" stroke-width="0.45">
 <rect x="501.6" y="145" width="10.4" height="6.8" rx="0.6"/>
 <rect x="515" y="145" width="48" height="6.8"/>
 <rect x="515" y="181" width="48" height="6.8"/>
 <rect x="501.6" y="217" width="10.4" height="6.8" rx="0.6"/>
 <rect x="515" y="217" width="48" height="6.8"/>
 <rect x="575" y="145" width="29.5" height="6.8"/>
 <rect x="575" y="163" width="29.5" height="6.8"/>
 <rect x="575" y="181" width="29.5" height="6.8"/>
 <rect x="575" y="199" width="29.5" height="6.8"/>
 <rect x="575" y="217" width="29.5" height="6.8"/>
 <rect x="515" y="243.5" width="48" height="7.6" stroke="#7fb5dc" fill="none"/>
 <rect x="575" y="243.5" width="29.5" height="7.6" stroke="#7fb5dc" fill="none"/>
</g>
<g font-size="4.5" fill="#2e3136" stroke="#2e3136" stroke-width="0.08">
 <text x="502.6" y="150.3" textLength="8.0" lengthAdjust="spacingAndGlyphs">0.75</text>
 <text x="502.6" y="222.3" textLength="8.0" lengthAdjust="spacingAndGlyphs">0.74</text>
 <text x="516.3" y="150.3" textLength="19.0" lengthAdjust="spacingAndGlyphs">± 0.002 A</text>
 <text x="516.3" y="186.3" textLength="16.5" lengthAdjust="spacingAndGlyphs">±0.010 in</text>
 <text x="516.3" y="222.3" textLength="19.0" lengthAdjust="spacingAndGlyphs">± 0.02 A</text>
 <text x="575.7" y="150.4" textLength="17.4" lengthAdjust="spacingAndGlyphs">Part (1.0)</text>
 <text x="575.7" y="168.3" textLength="24.6" lengthAdjust="spacingAndGlyphs">Default (1.0)</text>
 <text x="575.7" y="186.4" textLength="17.4" lengthAdjust="spacingAndGlyphs">Part (1.0)</text>
 <text x="575.7" y="204.3" textLength="24.6" lengthAdjust="spacingAndGlyphs">Default (1.0)</text>
 <text x="575.7" y="222.4" textLength="17.4" lengthAdjust="spacingAndGlyphs">Part (1.0)</text>
</g>
<!-- link icons -->
<g fill="none" stroke="#2a2a2a" stroke-width="1">
 <rect x="-1.6" y="-3.4" width="3.2" height="4.4" rx="1.6" transform="translate(567.3,148.4) rotate(-40)"/>
 <rect x="-1.6" y="-1" width="3.2" height="4.4" rx="1.6" transform="translate(569.2,150.6) rotate(-40)"/>
 <rect x="-1.6" y="-3.4" width="3.2" height="4.4" rx="1.6" transform="translate(567.3,220.4) rotate(-40)"/>
 <rect x="-1.6" y="-1" width="3.2" height="4.4" rx="1.6" transform="translate(569.2,222.6) rotate(-40)"/>
</g>
<!-- stackup arrows -->
<g stroke="#111" stroke-width="0.65" fill="#111">
 <path d="M390 140 V157" fill="none"/><path d="M388.3 140.2 H391.7" fill="none"/><path d="M388.4 156.4 h3.2 l-1.6 2z"/>
 <path d="M390 176 V193" fill="none"/><path d="M388.3 176.2 H391.7" fill="none"/><path d="M388.4 192.4 h3.2 l-1.6 2z"/>
 <path d="M390 212 V229" fill="none"/><path d="M388.3 212.2 H391.7" fill="none"/><path d="M388.4 228.4 h3.2 l-1.6 2z"/>
</g>
<path d="M388.8 235.5 h2.4 M390 235.5 v5 M388.8 240.5 h2.4" stroke="#c0702a" stroke-width="0.5" fill="none"/>
<!-- scrollbar -->
<rect x="655.6" y="126.6" width="6.2" height="126" fill="#f0f0f0"/>
<rect x="656.4" y="136" width="4.6" height="59" fill="#c9c9c9"/>
<path d="M657.5 130.5 h2.4 l-1.2 -1.3z M657.5 248.8 h2.4 l-1.2 1.3z" fill="#555"/>
<line x1="385" y1="252.2" x2="655" y2="252.2" stroke="#d8dadd" stroke-width="0.5"/>
<!-- details -->
<path d="M387.9 260.2 h3.4 l-1.7 2.2z" fill="#333"/>
<text x="394.2" y="262.6" font-size="4.8" font-weight="bold" fill="#2a2c30" textLength="14.4" lengthAdjust="spacingAndGlyphs">Details</text>
<rect x="386.4" y="265.6" width="18.8" height="12" fill="#fbfbfb"/>
<text x="388.6" y="272.2" font-size="4.6" fill="#333" textLength="12.8" lengthAdjust="spacingAndGlyphs">Results</text>
<rect x="406.2" y="265.6" width="33" height="9.2" fill="#e9ebed" stroke="#d9dcdf" stroke-width="0.4"/>
<text x="409.8" y="272.2" font-size="4.6" fill="#9aa0a6" textLength="26.4" lengthAdjust="spacingAndGlyphs">Contributions</text>
<path d="M440.5 269.5 v5.2 l1.3 -1.2 l1 2 l0.8 -0.4 l-1 -1.9 h1.8z" fill="#fff" stroke="#555" stroke-width="0.35"/>
<!-- results panel -->
<rect x="389.6" y="277.8" width="268" height="100.6" fill="#fefefe" stroke="#c4c7cb" stroke-width="0.5"/>
<line x1="389.8" y1="277.8" x2="389.8" y2="378.4" stroke="#8a8e93" stroke-width="0.6"/>
<text x="396" y="285.2" font-size="4.2" font-weight="bold" fill="#1e2024" textLength="72.6" lengthAdjust="spacingAndGlyphs">Statistical Results for gap for washer</text>
<g font-size="4" fill="#333">
 <text x="396" y="292.6" textLength="45.6" lengthAdjust="spacingAndGlyphs">Target Quality: Cpk = 1.30</text>
 <text x="396" y="297" textLength="49.8" lengthAdjust="spacingAndGlyphs">Predicted Quality: Cpk = 1.10</text>
 <text x="396" y="301.6" textLength="24" lengthAdjust="spacingAndGlyphs">Mean: 0.07 in</text>
 <text x="396" y="306.4" textLength="46.5" lengthAdjust="spacingAndGlyphs">Standard Deviation: 0.01 in</text>
</g>
<!-- chart -->
<rect x="396" y="319.2" width="255.5" height="44.9" fill="#fff" stroke="#9a9ea3" stroke-width="0.5"/>
<path d="M447 364.1 L447.0 363.66 L449.0 363.55 L451.0 363.41 L453.0 363.25 L455.0 363.05 L457.0 362.82 L459.0 362.54 L461.0 362.21 L463.0 361.83 L465.0 361.38 L467.0 360.87 L469.0 360.28 L471.0 359.61 L473.0 358.86 L475.0 358.01 L477.0 357.07 L479.0 356.03 L481.0 354.90 L483.0 353.67 L485.0 352.34 L487.0 350.92 L489.0 349.41 L491.0 347.84 L493.0 346.19 L495.0 344.50 L497.0 342.78 L499.0 341.04 L501.0 339.31 L503.0 337.60 L505.0 335.94 L507.0 334.36 L509.0 332.87 L511.0 331.50 L513.0 330.28 L515.0 329.21 L517.0 328.32 L519.0 327.63 L521.0 327.14 L523.0 326.86 L525.0 326.81 L527.0 326.97 L529.0 327.35 L531.0 327.95 L533.0 328.74 L535.0 329.72 L537.0 330.87 L539.0 332.17 L541.0 333.60 L543.0 335.14 L545.0 336.77 L547.0 338.45 L549.0 340.17 L551.0 341.91 L553.0 343.65 L555.0 345.35 L557.0 347.02 L559.0 348.63 L561.0 350.18 L563.0 351.64 L565.0 353.01 L567.0 354.29 L569.0 355.48 L571.0 356.56 L573.0 357.55 L575.0 358.44 L577.0 359.24 L579.0 359.95 L581.0 360.58 L583.0 361.13 L585.0 361.61 L587.0 362.03 L589.0 362.38 L591.0 362.68 L593.0 362.94 L595.0 363.16 L597.0 363.34 L599.0 363.49 L601.0 363.61 L601.6 364.1 Z" fill="#0c5c17"/>
<!--BELL-->
<line x1="412" y1="364.1" x2="447" y2="364.1" stroke="#a07a5c" stroke-width="0.8"/>
<line x1="601.6" y1="364.1" x2="636" y2="364.1" stroke="#a07a5c" stroke-width="0.8"/>
<line x1="432.4" y1="319.2" x2="432.4" y2="364.1" stroke="#c08a62" stroke-width="0.85"/>
<line x1="615.7" y1="319.2" x2="615.7" y2="364.1" stroke="#c08a62" stroke-width="0.85"/>
<line x1="447" y1="319.2" x2="447" y2="364.5" stroke="#111" stroke-width="0.85"/>
<line x1="601.6" y1="319.2" x2="601.6" y2="364.5" stroke="#111" stroke-width="0.85"/>
<g font-size="3.2" fill="#333" text-anchor="middle">
 <text x="435" y="315">-0.02 in</text>
 <text x="618" y="315">+0.02 in</text>
 <text x="447.5" y="371.6">-0.02 in</text>
 <text x="524" y="371.6">0.07 in</text>
 <text x="602.5" y="371.6">+0.02 in</text>
</g>
<line x1="524.5" y1="364.1" x2="524.5" y2="366" stroke="#333" stroke-width="0.4"/>
<!-- panel scrollbar -->
<rect x="651.5" y="278" width="6" height="98" fill="#f2f2f2"/>
<line x1="651.7" y1="283" x2="651.7" y2="362" stroke="#b0b3b6" stroke-width="0.5"/>
<rect x="652" y="278.3" width="5" height="5" fill="#fff" stroke="#999" stroke-width="0.35"/>
<path d="M653.3 281.8 h2.4 l-1.2 -1.4z" fill="#222"/>
<rect x="652" y="370.5" width="5" height="5" fill="#fff" stroke="#999" stroke-width="0.35"/>
<path d="M653.3 372.3 h2.4 l-1.2 1.4z" fill="#222"/>
<!--/DIALOG-->
</svg>
</body></html>
